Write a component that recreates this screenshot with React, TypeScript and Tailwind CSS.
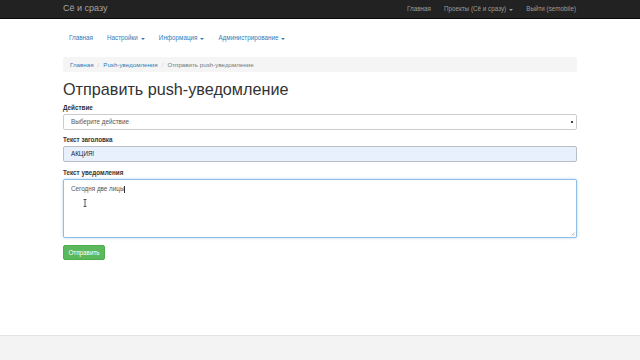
import React from 'react';

const font = { fontFamily: '"Liberation Sans", Arial, sans-serif' };

function Caret({ className = '' }: { className?: string }) {
  return (
    <span
      className={`inline-block ml-[3px] align-middle border-x-[2px] border-t-[2px] border-x-transparent border-t-current ${className}`}
    />
  );
}

function TopNav() {
  return (
    <div className="h-[19px] bg-[#222] border-b border-[#080808]">
      <div className="w-[514px] mx-auto h-full flex items-center justify-between">
        <span className="text-[9px] text-[#a5a5a5]">Сё и сразу</span>
        <div className="flex items-center gap-[13px] text-[6.3px] text-[#9d9d9d] pr-[1px]">
          <span>Главная</span>
          <span>
            Проекты (Сё и сразу)
            <Caret />
          </span>
          <span>Выйти (semobile)</span>
        </div>
      </div>
    </div>
  );
}

function SubNav() {
  const items = [
    { label: 'Главная', caret: false },
    { label: 'Настройки', caret: true },
    { label: 'Информация', caret: true },
    { label: 'Администрирование', caret: true },
  ];
  return (
    <div className="w-[514px] mx-auto h-[38px] flex items-center gap-[14px] pl-[6px] text-[6.3px] text-[#337ab7]">
      {items.map((it) => (
        <span key={it.label}>
          {it.label}
          {it.caret && <Caret />}
        </span>
      ))}
    </div>
  );
}

export default function App() {
  return (
    <div className="h-[360px] flex flex-col bg-white text-[#333]" style={font}>
      <TopNav />
      <SubNav />
      <div className="w-[514px] mx-auto">
        <div className="h-[15px] bg-[#f5f5f5] rounded-[2px] flex items-center px-[7px] text-[6.2px]">
          <span className="text-[#337ab7]">Главная</span>
          <span className="text-[#ccc] px-[4px]">/</span>
          <span className="text-[#337ab7]">Push-уведомления</span>
          <span className="text-[#ccc] px-[4px]">/</span>
          <span className="text-[#777]">Отправить push-уведомление</span>
        </div>

        <h1 className="text-[16.2px] leading-[20px] mt-[7px] text-[#333]">Отправить push-уведомление</h1>

        <div className="mt-[5px] text-[6.3px] font-bold leading-[8px]">Действие</div>
        <div className="mt-[2px] h-[16px] border border-[#ccc] rounded-[2px] bg-white flex items-center justify-between pl-[7px] pr-[3px] text-[6.3px] text-[#555]">
          <span>Выберите действие</span>
          <span className="w-[2px] h-[2px] bg-[#444]" />
        </div>

        <div className="mt-[6px] text-[6.3px] font-bold leading-[8px]">Текст заголовка</div>
        <div className="mt-[2px] h-[16px] border border-[#b9bfc6] rounded-[2px] bg-[#e8f0fe] flex items-center pl-[7px] text-[6.3px] text-[#222]">
          АКЦИЯ!
        </div>

        <div className="mt-[7px] text-[6.3px] font-bold leading-[8px]">Текст уведомления</div>
        <div className="relative mt-[2px] h-[59px] border border-[#8fbde6] rounded-[2px] bg-white shadow-[0_0_3px_rgba(102,175,233,0.5)] pl-[7px] pt-[4px] text-[6.3px] text-[#555]">
          <span>Сегодня две лицы</span>
          <span className="inline-block w-[0.5px] h-[7px] bg-[#333] align-middle" />
          <svg className="absolute left-[19px] top-[19px]" width="4" height="8" viewBox="0 0 4 8">
            <path d="M0.5 0.5h3M2 0.5v7M0.5 7.5h3" stroke="#333" strokeWidth="0.8" fill="none" />
          </svg>
          <svg className="absolute right-[1px] bottom-[1px]" width="4" height="4" viewBox="0 0 4 4">
            <path d="M3.5 0.5L0.5 3.5M3.5 2L2 3.5" stroke="#999" strokeWidth="0.6" />
          </svg>
        </div>

        <div className="mt-[7px] w-[42px] h-[15px] rounded-[2px] bg-[#5cb85c] border border-[#4cae4c] flex items-center justify-center text-[6.3px] text-white">
          Отправить
        </div>
      </div>

      <div className="mt-auto h-[25px] bg-[#f3f3f3] border-t border-[#e3e3e3]" />
    </div>
  );
}
